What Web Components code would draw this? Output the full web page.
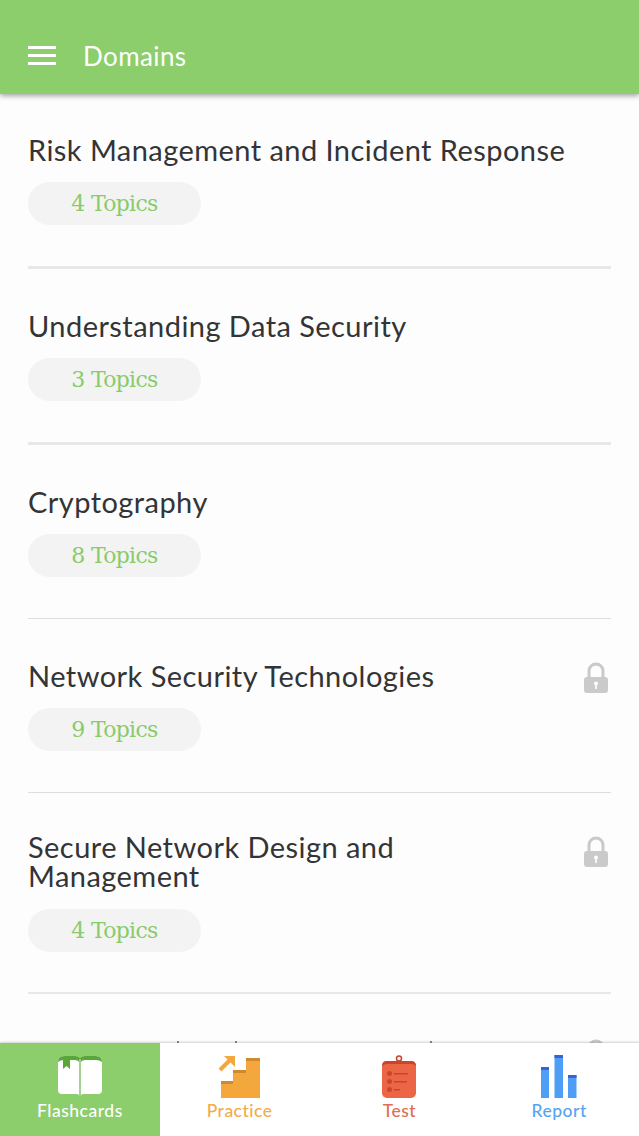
<!DOCTYPE html>
<html>
<head>
<meta charset="utf-8">
<title>Domains</title>
<style>
  html, body { margin: 0; height: 100%; background: #fdfdfd; }
  body { font-family: "Lato", "Liberation Sans", sans-serif; }
</style>
</head>
<body>
<app-shell>
  <app-header slot="header" title="Domains"></app-header>
  <domain-row title="Risk Management and Incident Response" topics="4 Topics" thick></domain-row>
  <domain-row title="Understanding Data Security" topics="3 Topics" thick></domain-row>
  <domain-row title="Cryptography" topics="8 Topics"></domain-row>
  <domain-row title="Network Security Technologies" topics="9 Topics" locked></domain-row>
  <domain-row title="Secure Network Design and Management" topics="4 Topics" locked wrapped></domain-row>
  <domain-row locked partial></domain-row>
  <bottom-nav slot="nav"></bottom-nav>
</app-shell>

<script>
class AppShell extends HTMLElement {
  constructor() {
    super();
    this.attachShadow({ mode: 'open' });
    this.shadowRoot.innerHTML = `
      <style>
        :host { display: flex; flex-direction: column; height: 1136px; overflow: hidden; }
        .list { flex: 1; min-height: 0; overflow: hidden; margin-top: -1px; }
        ::slotted(app-header) { z-index: 2; }
      </style>
      <slot name="header"></slot>
      <div class="list"><slot></slot></div>
      <slot name="nav"></slot>
    `;
  }
}

class AppHeader extends HTMLElement {
  constructor() {
    super();
    this.attachShadow({ mode: 'open' });
  }
  connectedCallback() {
    this.shadowRoot.innerHTML = `
      <style>
        :host {
          display: flex; align-items: center; gap: 27px; position: relative;
          height: 76px; padding: 18px 28px 0; background: #8ccd6c; color: #fff;
          box-shadow: 0 2px 5px rgba(0,0,0,.35);
        }
        svg { display: block; width: 28px; height: 20px; }
        h1 { margin: 0; font: 400 26px/30px "Lato", "Liberation Sans", sans-serif; letter-spacing: .4px; }
      </style>
      <svg viewBox="0 0 28 20" fill="#fff"><rect y="0" width="28" height="3"/><rect y="8" width="28" height="3"/><rect y="16" width="28" height="3"/></svg>
      <h1>${this.getAttribute('title')}</h1>
    `;
  }
}

class DomainRow extends HTMLElement {
  constructor() {
    super();
    this.attachShadow({ mode: 'open' });
  }
  connectedCallback() {
    const lock = this.hasAttribute('locked') ? `
      <svg class="lock" viewBox="0 0 24 32">
        <path d="M5 17V10a7 7 0 0 1 14 0v7" fill="none" stroke="#cacaca" stroke-width="3"/>
        <rect y="16" width="24" height="16" rx="3" fill="#cacaca"/>
        <circle cx="12" cy="22.500" r="2" fill="#fff"/>
        <rect x="11.200" y="23" width="1.600" height="5" fill="#fff"/>
      </svg>` : '';
    const body = this.hasAttribute('partial') ? '' : `
      <span class="pill">${this.getAttribute('topics')}</span>
      <div class="rule"></div>`;
    this.shadowRoot.innerHTML = `
      <style>
        :host { display: block; padding: 0 28px; }
        .head { display: flex; justify-content: space-between; align-items: flex-start; padding-top: 42px; }
        :host([wrapped]) .head { padding-top: 39px; }
        :host([partial]) .head { padding-top: 44px; }
        h2 { flex: 1; min-height: 29px; margin: 0; font: 400 29px/29px "Lato", "Liberation Sans", sans-serif; color: #333436; letter-spacing: .45px; }
        :host([locked]) h2 { max-width: 500px; }
        /* tips of the next title, the rest is under the nav */
        :host([partial]) h2 {
          background:
            linear-gradient(#8a8a8a, #8a8a8a) 149px 3px / 2px 2px no-repeat,
            linear-gradient(#8a8a8a, #8a8a8a) 207px 3px / 2px 2px no-repeat,
            linear-gradient(#8a8a8a, #8a8a8a) 402px 3px / 2px 2px no-repeat;
        }
        .lock { width: 24px; height: 32px; flex: none; margin: 0 3px -3px 0; }
        :host([wrapped]) .lock { margin-top: 3px; }
        .pill {
          display: block; width: 173px; height: 43px; margin-top: 18px; border-radius: 22px;
          background: #f3f3f3; color: #88cb6a; text-align: center;
          font: 400 22px/43px "DejaVu Serif", "Liberation Serif", serif; letter-spacing: -.7px;
        }
        :host([wrapped]) .pill { margin-top: 19px; }
        .rule { height: 1px; margin-top: 41px; background: #dedede; }
        :host([thick]) .rule { height: 3px; background: #e8e8e8; }
        :host([wrapped]) .rule { height: 2px; margin-top: 40px; background: #e8e8e8; }
      </style>
      <div class="head"><h2>${this.getAttribute('title') || ''}</h2>${lock}</div>
      ${body}
    `;
  }
}

const NAV_ICONS = {
  book: `<svg viewBox="58 1054 44 44">
      <path d="M58 1062q0-6 6-6h11q4 0 5 2q1-2 5-2h11q6 0 6 6v28q0 4-4 4H84q-3 0-4 2q-1-2-4-2H62q-4 0-4-4z" fill="#fff"/>
      <path d="M58 1062q0-6 6-6h11q4 0 5 2q1-2 5-2h11q6 0 6 6q-2-2-6-2H85q-3 0-4 2H79q-1-2-4-2H64q-4 0-6 2z" fill="#5ba63b"/>
      <path d="M63 1058h7v11l-3.500-3-3.500 3z" fill="#5ba63b"/>
      <rect x="79" y="1059" width="2" height="37" fill="#a6cf92"/>
    </svg>`,
  stairs: `<svg viewBox="218 1054 44 44">
      <path d="M221 1098v-17h12v-11h13v-12h14v40z" fill="#f3a73d"/>
      <path d="M221 1081h12v3h-12zM233 1070h13v3h-13zM246 1058h14v3h-14z" fill="#cf8a30"/>
      <path d="M220 1070l11-11" stroke="#f3a73d" stroke-width="4" fill="none"/>
      <path d="M224 1056h11v11z" fill="#f3a73d"/>
    </svg>`,
  test: `<svg viewBox="377 1054 44 44">
      <circle cx="399" cy="1058.500" r="2.500" fill="none" stroke="#c8472c" stroke-width="1.500"/>
      <rect x="382" y="1061" width="34" height="37" rx="5" fill="#ec6544"/>
      <path d="M382 1066q0-5 5-5h24q5 0 5 5q-2-2-5-2h-24q-3 0-5 2z" fill="#c8472c"/>
      <g fill="#c8472c"><circle cx="389.500" cy="1073.500" r="2.500"/><circle cx="389.500" cy="1081.500" r="2.500"/><circle cx="389.500" cy="1089.500" r="2.500"/>
      <rect x="394" y="1073" width="14" height="1.500"/><rect x="394" y="1081" width="13" height="1.500"/><rect x="394" y="1089" width="6" height="1.500"/></g>
    </svg>`,
  report: `<svg viewBox="537 1054 44 44">
      <path d="M541 1067h8v31h-8zM554.500 1055h8.500v43h-8.500zM568 1075h8.500v23H568z" fill="#4f9ef5"/>
      <path d="M541 1067h8v3h-8zM554.500 1055h8.500v3h-8.500zM568 1075h8.500v3H568z" fill="#3a62d6"/>
    </svg>`
};

class NavItem extends HTMLElement {
  constructor() {
    super();
    this.attachShadow({ mode: 'open' });
  }
  connectedCallback() {
    this.shadowRoot.innerHTML = `
      <style>
        :host {
          flex: 1; display: flex; flex-direction: column; align-items: center;
          padding-top: 11px; color: var(--c);
          font: 500 17.500px/20px "Lato", "Liberation Sans", sans-serif; letter-spacing: .5px;
        }
        :host([active]) { background: #8ccd6c; }
        svg { display: block; width: 44px; height: 44px; }
        span { margin-top: 3px; }
      </style>
      ${NAV_ICONS[this.getAttribute('icon')]}
      <span>${this.getAttribute('label')}</span>
    `;
    this.style.setProperty('--c', this.getAttribute('color'));
  }
}

class BottomNav extends HTMLElement {
  constructor() {
    super();
    this.attachShadow({ mode: 'open' });
    this.shadowRoot.innerHTML = `
      <style>
        :host {
          display: flex; height: 93px; flex: none; background: #fff; position: relative;
          box-shadow: 0 -1px 2px rgba(0,0,0,.18);
        }
      </style>
      <nav-item icon="book" label="Flashcards" color="#fff" active></nav-item>
      <nav-item icon="stairs" label="Practice" color="#f0ac4e"></nav-item>
      <nav-item icon="test" label="Test" color="#df6d50"></nav-item>
      <nav-item icon="report" label="Report" color="#56a5f2"></nav-item>
    `;
  }
}

customElements.define('app-shell', AppShell);
customElements.define('app-header', AppHeader);
customElements.define('domain-row', DomainRow);
customElements.define('nav-item', NavItem);
customElements.define('bottom-nav', BottomNav);
</script>
</body>
</html>
